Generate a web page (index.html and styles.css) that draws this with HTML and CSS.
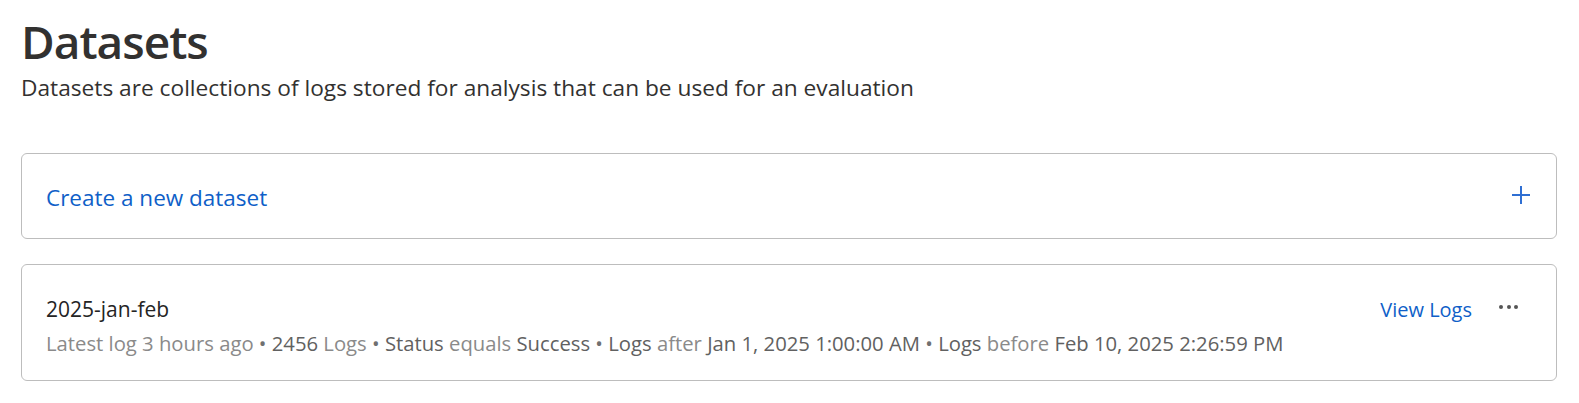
FILE: index.html
```html
<!DOCTYPE html>
<html lang="en">
<head>
<meta charset="utf-8">
<title>Datasets</title>
<link rel="stylesheet" href="styles.css">
</head>
<body>
<main class="page">
  <header class="page-header">
    <h1 class="page-title">Datasets</h1>
    <p class="page-subtitle">Datasets are collections of logs stored for analysis that can be used for an evaluation</p>
  </header>

  <section class="card card-create">
    <a class="create-link" href="#">Create a new dataset</a>
    <svg class="plus-icon" width="18" height="18" viewBox="0 0 18 18" aria-hidden="true">
      <path d="M9 0v18M0 9h18" stroke="#2f6fd3" stroke-width="2" fill="none"/>
    </svg>
  </section>

  <section class="card card-dataset">
    <div class="dataset-main">
      <div class="dataset-name">2025-jan-feb</div>
      <div class="dataset-meta">
        <span class="light">Latest log 3 hours ago</span>
        <span class="sep">•</span>
        <span class="dark">2456</span> <span class="light">Logs</span>
        <span class="sep">•</span>
        <span class="dark">Status</span> <span class="light">equals</span> <span class="dark">Success</span>
        <span class="sep">•</span>
        <span class="dark">Logs</span> <span class="light">after</span> <span class="dark">Jan 1, 2025 1:00:00 AM</span>
        <span class="sep">•</span>
        <span class="dark">Logs</span> <span class="light">before</span> <span class="dark">Feb 10, 2025 2:26:59 PM</span>
      </div>
    </div>
    <div class="dataset-actions">
      <a class="view-logs" href="#">View Logs</a>
      <span class="more" aria-label="More options"><i></i><i></i><i></i></span>
    </div>
  </section>
</main>
</body>
</html>
```

FILE: styles.css
```css
html, body {
  margin: 0;
  padding: 0;
  background: #ffffff;
}

body {
  font-family: "Open Sans", "Noto Sans", "Liberation Sans", sans-serif;
  color: #323130;
}

.page {
  padding: 12px 22px 0 21px;
}

.page-header {
  margin-bottom: 50px;
}

.page-title {
  margin: 0;
  font-size: 46px;
  line-height: 58px;
  font-weight: 600;
  color: #323130;
  letter-spacing: -1px;
}

.page-subtitle {
  margin: 3px 0 0;
  font-size: 22.7px;
  line-height: 30px;
  color: #323130;
}

.card {
  border: 1px solid #bdbdbd;
  border-radius: 6px;
  box-sizing: border-box;
  background: #fff;
}

.card-create {
  height: 86px;
  display: flex;
  align-items: center;
  justify-content: space-between;
  padding: 3px 26px 0 24px;
}

.create-link {
  font-size: 22.5px;
  color: #0f5fc8;
  text-decoration: none;
}

.plus-icon {
  display: block;
  margin-bottom: 6px;
}

.card-dataset {
  margin-top: 25px;
  height: 117px;
  display: flex;
  justify-content: space-between;
  align-items: flex-start;
  padding: 30px 38px 0 24px;
}

.dataset-name {
  font-size: 21px;
  line-height: 28px;
  color: #242424;
}

.dataset-meta {
  margin-top: 7px;
  font-size: 20.25px;
  line-height: 26px;
}

.light {
  color: #8a8a8a;
}

.dark {
  color: #616161;
}

.sep {
  color: #707070;
}

.dataset-actions {
  display: flex;
  align-items: center;
  gap: 27px;
  height: 28px;
}

.view-logs {
  font-size: 20px;
  line-height: 28px;
  color: #0f5fc8;
  text-decoration: none;
  padding-top: 2px;
}

.more {
  display: flex;
  gap: 3.5px;
  align-items: center;
  margin-bottom: 5px;
}

.more i {
  display: block;
  width: 4px;
  height: 4px;
  border-radius: 50%;
  background: #555;
}
```
